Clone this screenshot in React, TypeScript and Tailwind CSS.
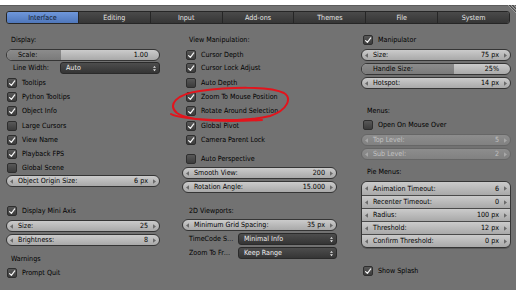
import React from 'react';

const tabs = ['Interface', 'Editing', 'Input', 'Add-ons', 'Themes', 'File', 'System'];

function Tick() {
  return (
    <svg viewBox="0 0 9 9" className="w-[9px] h-[9px]">
      <path d="M1.8 4.6 L3.8 6.6 L7.6 1.6" fill="none" stroke="#f2f2f2" strokeWidth="1.4" strokeLinecap="round" strokeLinejoin="round" />
    </svg>
  );
}

function Check({ label, checked, className = '' }: { label: string; checked?: boolean; className?: string }) {
  return (
    <div className={`flex h-[14px] items-center ${className}`}>
      <span className="flex w-[10px] h-[10px] shrink-0 items-center justify-center rounded-[2px] border border-[#2e2e2e] bg-gradient-to-b from-[#585858] to-[#3c3c3c]">
        {checked && <Tick />}
      </span>
      <span className="ml-[5px] whitespace-nowrap">{label}</span>
    </div>
  );
}

function Heading({ text, className = '' }: { text: string; className?: string }) {
  return <div className={`flex h-[14px] items-center whitespace-nowrap ${className}`}>{text}</div>;
}

function Arrow({ dir, color }: { dir: 'l' | 'r'; color: string }) {
  return (
    <svg viewBox="0 0 4 6" className="w-[3px] h-[5px] shrink-0">
      <path d={dir === 'l' ? 'M4 0 L0 3 L4 6 Z' : 'M0 0 L4 3 L0 6 Z'} fill={color} />
    </svg>
  );
}

function Slider({
  label,
  value,
  disabled,
  arrows = true,
  fill,
  joined,
}: {
  label: string;
  value: string;
  disabled?: boolean;
  arrows?: boolean;
  fill?: number;
  joined?: boolean;
}) {
  const shell = joined
    ? 'h-[13px] border-t border-[#4a4a4a] first:border-t-0'
    : `h-[12px] rounded-full border ${disabled ? 'border-[#666]' : 'border-[#353535]'}`;
  const bg = disabled ? 'from-[#8d8d8d] to-[#818181]' : 'from-[#cbcbcb] to-[#a9a9a9]';
  const arrowColor = disabled ? '#a8a8a8' : '#6a6a6a';
  return (
    <div className={`relative flex items-center overflow-hidden bg-gradient-to-b ${bg} ${shell} ${disabled ? 'text-[#c2c2c2]' : 'text-black'}`}>
      {fill !== undefined && (
        <div className="absolute inset-y-0 left-0 bg-gradient-to-b from-[#8c8c8c] to-[#7a7a7a]" style={{ width: fill }} />
      )}
      <div className="relative flex flex-1 items-center px-[3px]">
        {arrows ? <Arrow dir="l" color={arrowColor} /> : <span className="w-[3px]" />}
        <span className="ml-[5px] flex-1 whitespace-nowrap">{label}</span>
        <span className="mr-[5px] whitespace-nowrap">{value}</span>
        {arrows ? <Arrow dir="r" color={arrowColor} /> : <span className="w-[3px]" />}
      </div>
    </div>
  );
}

function Menu({ label, value, labelWidth }: { label?: string; value: string; labelWidth?: string }) {
  return (
    <div className="flex h-[14px] items-center">
      {label && <span className={`${labelWidth} whitespace-nowrap pl-[7px]`}>{label}</span>}
      <div className="flex h-[12px] flex-1 items-center rounded-[3px] border border-[#2a2a2a] bg-gradient-to-b from-[#4d4d4d] to-[#353535] pl-[5px] pr-[3px] text-[#f0f0f0]">
        <span className="flex-1 whitespace-nowrap">{value}</span>
        <svg viewBox="0 0 4 8" className="w-[3px] h-[7px]">
          <path d="M0 3 L2 0.5 L4 3 Z M0 5 L2 7.5 L4 5 Z" fill="#e8e8e8" />
        </svg>
      </div>
    </div>
  );
}

export default function App() {
  return (
    <div className="relative h-[290px] w-[516px] overflow-hidden bg-[#727272] font-['DejaVu_Sans_Condensed','DejaVu_Sans',sans-serif] text-[7.1px] leading-none text-black">
      <div className="h-[5px] bg-white" />
      <div className="h-[1px] bg-[#5c5c5c]" />

      {/* resize corner */}
      <svg viewBox="0 0 10 10" className="absolute right-0 top-[5px] w-[10px] h-[10px]">
        <path d="M2 0 L10 8 M5 0 L10 5 M8 0 L10 2" stroke="#a0a0a0" strokeWidth="0.9" />
        <path d="M3 0 L10 7 M6 0 L10 4" stroke="#3e3e3e" strokeWidth="0.7" />
      </svg>

      {/* tabs */}
      <div className="mx-[6px] mt-[5px] flex h-[13px] overflow-hidden rounded-[3px] border border-[#262626]">
        {tabs.map((t, i) => (
          <div
            key={t}
            className={`flex flex-1 items-center justify-center ${i > 0 ? 'border-l border-[#262626]' : ''} ${
              i === 0
                ? 'bg-gradient-to-b from-[#6f97da] to-[#4f77bb] text-[#101828]'
                : 'bg-gradient-to-b from-[#4a4a4a] to-[#363636] text-[#e6e6e6]'
            }`}
          >
            {t}
          </div>
        ))}
      </div>

      <div className="mt-[9px] flex pl-[6px]">
        {/* column 1 */}
        <div className="flex w-[154px] flex-col">
          <Heading text="Display:" className="pl-[5px]" />
          <div className="mt-[1px] flex h-[14px] items-center">
            <div className="w-full">
              <Slider label="Scale:" value="1.00" arrows={false} fill={54} />
            </div>
          </div>
          <div className="-mt-[1px]">
            <Menu label="Line Width:" value="Auto" labelWidth="w-[54px] pl-[5px]" />
          </div>
          <Check label="Tooltips" checked className="mt-[1px] pl-[1px]" />
          <Check label="Python Tooltips" checked className="pl-[1px]" />
          <Check label="Object Info" checked className="pl-[1px]" />
          <Check label="Large Cursors" className="mt-[1px] pl-[1px]" />
          <Check label="View Name" checked className="pl-[1px]" />
          <Check label="Playback FPS" checked className="pl-[1px]" />
          <Check label="Global Scene" className="pl-[1px]" />
          <div className="-mt-[1px] flex h-[14px] items-center">
            <div className="w-full">
              <Slider label="Object Origin Size:" value="6 px" />
            </div>
          </div>
          <Check label="Display Mini Axis" checked className="mt-[16px] pl-[1px]" />
          <div className="mt-[1px] flex flex-col gap-[2px] pt-[1px]">
            <Slider label="Size:" value="25" />
            <Slider label="Brightness:" value="8" />
          </div>
          <Heading text="Warnings" className="mt-[6px] pl-[5px]" />
          <Check label="Prompt Quit" checked className="pl-[1px]" />
        </div>

        {/* column 2 */}
        <div className="ml-[22px] flex w-[155px] flex-col">
          <Heading text="View Manipulation:" className="pl-[7px]" />
          <Check label="Cursor Depth" checked className="mt-[1px] pl-[4px]" />
          <Check label="Cursor Lock Adjust" checked className="-mt-[1px] pl-[4px]" />
          <Check label="Auto Depth" className="mt-[1px] pl-[4px]" />
          <Check label="Zoom To Mouse Position" checked className="pl-[4px]" />
          <Check label="Rotate Around Selection" checked className="pl-[4px]" />
          <Check label="Global Pivot" checked className="mt-[1px] pl-[4px]" />
          <Check label="Camera Parent Lock" checked className="pl-[4px]" />
          <Check label="Auto Perspective" className="mt-[5px] pl-[4px]" />
          <div className="flex flex-col gap-[2px] pt-[1px]">
            <Slider label="Smooth View:" value="200" />
            <Slider label="Rotation Angle:" value="15.000" />
          </div>
          <Heading text="2D Viewports:" className="mt-[11px] pl-[7px]" />
          <div className="flex h-[14px] items-center">
            <div className="w-full">
              <Slider label="Minimum Grid Spacing:" value="35 px" />
            </div>
          </div>
          <Menu label="TimeCode S…" value="Minimal Info" labelWidth="w-[56px]" />
          <Menu label="Zoom To Fr…" value="Keep Range" labelWidth="w-[56px]" />
        </div>

        {/* column 3 */}
        <div className="ml-[24px] flex w-[150px] flex-col">
          <Check label="Manipulator" checked className="pl-[2px]" />
          <div className="mt-[2px] flex flex-col gap-[2px]">
            <Slider label="Size:" value="75 px" />
            <Slider label="Handle Size:" value="25%" arrows={false} fill={92} />
            <Slider label="Hotspot:" value="14 px" />
          </div>
          <Heading text="Menus:" className="mt-[15px] pl-[6px]" />
          <Check label="Open On Mouse Over" className="pl-[2px]" />
          <div className="mt-[2px] flex flex-col gap-[2px]">
            <Slider label="Top Level:" value="5" disabled />
            <Slider label="Sub Level:" value="2" disabled />
          </div>
          <Heading text="Pie Menus:" className="mt-[5px] pl-[6px]" />
          <div className="mt-[2px] flex flex-col overflow-hidden rounded-[6px] border border-[#353535] shadow-[0_1px_0_#5a5a5a]">
            <Slider joined label="Animation Timeout:" value="6" />
            <Slider joined label="Recenter Timeout:" value="0" />
            <Slider joined label="Radius:" value="100 px" />
            <Slider joined label="Threshold:" value="12 px" />
            <Slider joined label="Confirm Threshold:" value="0 px" />
          </div>
          <Check label="Show Splash" checked className="mt-[16px] pl-[2px]" />
        </div>
      </div>

      {/* red annotation loop */}
      <svg className="pointer-events-none absolute left-0 top-0 h-[290px] w-[516px]" viewBox="0 0 516 290">
        <path
          d="M262 120 C232 122 190 122 177 113 C167 105 176 94 200 91 C230 87 270 86 284 93 C292 98 288 110 270 116 C250 121 210 121 188 118 C180 117 174 116 171 114"
          fill="none"
          stroke="#e3141c"
          strokeWidth="2"
          strokeLinecap="round"
        />
      </svg>
    </div>
  );
}
